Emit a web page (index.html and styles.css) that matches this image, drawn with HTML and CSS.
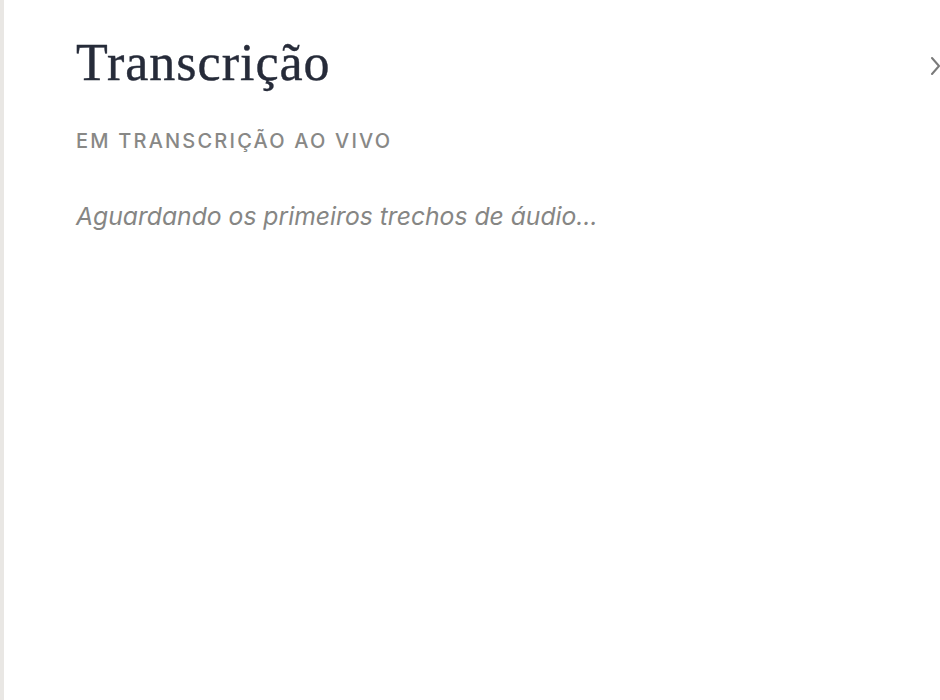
FILE: index.html
```html
<!DOCTYPE html>
<html lang="pt">
<head>
<meta charset="utf-8">
<link rel="stylesheet" href="styles.css">
</head>
<body>
<div class="page">
  <aside class="rail"></aside>
  <main class="panel">
    <header class="head">
      <h1 class="title">Transcrição</h1>
      <button class="close" aria-label="Fechar">
        <svg width="12" height="20" viewBox="0 0 12 20"><path d="M4 2 L11 10 L4 18" fill="none" stroke="#7a7a7a" stroke-width="2" stroke-linecap="round" stroke-linejoin="round"/></svg>
      </button>
    </header>
    <p class="label">EM TRANSCRIÇÃO AO VIVO</p>
    <p class="waiting">Aguardando os primeiros trechos de áudio…</p>
  </main>
</div>
</body>
</html>
```
FILE: styles.css
```css
html, body { margin: 0; padding: 0; background: #fff; }
.page { display: flex; height: 700px; width: 940px; overflow: hidden; }
.rail { width: 4px; flex: none; background: #e9e7e4; }
.panel { flex: 1; padding: 33px 0 0 72px; }
.head { display: flex; align-items: center; justify-content: space-between; }
.title {
  margin: 0;
  font-family: "Liberation Serif", "DejaVu Serif", serif;
  font-weight: 400;
  font-size: 52px;
  letter-spacing: 1px;
  line-height: 60px;
  color: #262b39;
  -webkit-text-stroke: 0.4px #262b39;
}
.close { border: 0; background: none; padding: 0; margin: 6px 0 0 0; display: flex; }
.label {
  margin: 34px 0 0;
  font-family: "Inter", "Liberation Sans", sans-serif;
  font-size: 20px;
  font-weight: 500;
  letter-spacing: 2.2px;
  color: #888886;
  line-height: 28px;
}
.waiting {
  margin: 45px 0 0;
  font-family: "Inter", "Liberation Sans", sans-serif;
  font-style: italic;
  font-size: 24.7px;
  font-weight: 400;
  color: #868684;
  line-height: 32px;
}
```
